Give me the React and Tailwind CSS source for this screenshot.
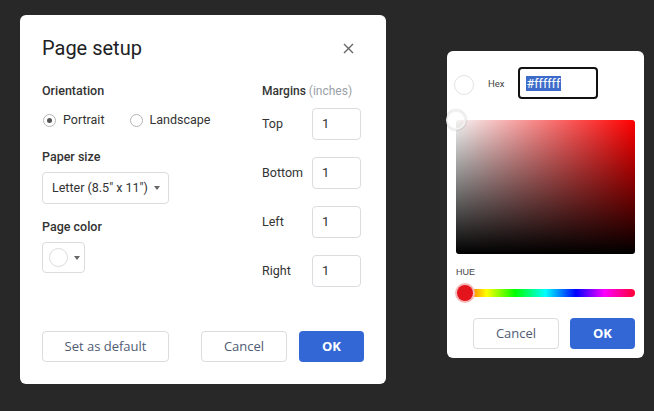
import React from "react";

const font = { fontFamily: "Roboto, 'Liberation Sans', sans-serif" };
const btnFont = { fontFamily: "'Open Sans', Roboto, sans-serif" };

function Caret() {
  return <span className="inline-block w-0 h-0 border-l-[3.5px] border-r-[3.5px] border-t-[4px] border-l-transparent border-r-transparent border-t-[#666]" />;
}

function Radio({ checked, label }) {
  return (
    <label className="flex items-center h-4">
      <span className="w-[13px] h-[13px] rounded-full border border-[#b5b5b5] flex items-center justify-center">
        {checked && <span className="w-[5px] h-[5px] rounded-full bg-[#555]" />}
      </span>
      <span className="ml-[7px] text-[12.5px] text-[#333]">{label}</span>
    </label>
  );
}

function MarginRow({ label }) {
  return (
    <div className="flex items-center h-8">
      <span className="w-[50px] text-[12.5px] text-[#333]">{label}</span>
      <div className="w-[49px] h-8 border border-[#dadce0] rounded-[4px] flex items-center pl-[9px] text-[13px] text-[#333]">1</div>
    </div>
  );
}

function PageSetup() {
  return (
    <div className="w-[366px] h-[369px] bg-white rounded-[6px] px-[22px] flex flex-col">
      <div className="flex items-center justify-between h-6 mt-[21px]">
        <h1 className="text-[20px] text-[#202124] leading-6">Page setup</h1>
        <svg width="11" height="11" viewBox="0 0 11 11" className="mr-[10px]">
          <path d="M1 1 L10 10 M10 1 L1 10" stroke="#666" strokeWidth="1.4" />
        </svg>
      </div>

      <div className="flex">
        <div className="w-[220px] flex flex-col">
          <div className="mt-[23px] h-4 text-[12.5px] font-medium text-[#333] leading-4">Orientation</div>
          <div className="mt-[13px] flex items-center">
            <div className="ml-[1px]"><Radio checked label="Portrait" /></div>
            <div className="ml-[25px]"><Radio label="Landscape" /></div>
          </div>
          <div className="mt-[21px] h-4 text-[12.5px] font-medium text-[#333] leading-4">Paper size</div>
          <div className="mt-[7px] w-[127px] h-8 border border-[#dadce0] rounded-[4px] flex items-center justify-between pl-[9px] pr-[8px] text-[12.5px] text-[#333]">
            <span>Letter (8.5" x 11")</span>
            <Caret />
          </div>
          <div className="mt-[15px] h-4 text-[12.5px] font-medium text-[#333] leading-4">Page color</div>
          <div className="mt-[7px] w-[43px] h-[31px] border border-[#dadce0] rounded-[4px] flex items-center pl-[6px] gap-[6px]">
            <span className="w-[19px] h-[19px] rounded-full border border-[#dadce0] bg-white" />
            <Caret />
          </div>
        </div>

        <div className="flex flex-col">
          <div className="mt-[23px] h-4 text-[12px] leading-4">
            <span className="font-medium text-[#333]">Margins</span>
            <span className="text-[#9aa0a6]"> (inches)</span>
          </div>
          <div className="mt-[9px] flex flex-col gap-[17px]">
            <MarginRow label="Top" />
            <MarginRow label="Bottom" />
            <MarginRow label="Left" />
            <MarginRow label="Right" />
          </div>
        </div>
      </div>

      <div className="mt-auto mb-[22px] flex items-center" style={btnFont}>
        <button className="w-[127px] h-[31px] border border-[#dadce0] rounded-[4px] text-[13px] text-[#4f5b73]">Set as default</button>
        <button className="ml-auto w-[86px] h-[31px] border border-[#dadce0] rounded-[4px] text-[13px] text-[#4f5b73]">Cancel</button>
        <button className="ml-[12px] w-[65px] h-[31px] rounded-[4px] bg-[#3367d6] text-[13px] font-bold text-white">OK</button>
      </div>
    </div>
  );
}

function ColorPicker() {
  return (
    <div className="w-[197px] h-[307px] bg-white rounded-[6px] px-[9px] flex flex-col">
      <div className="mt-[16px] h-8 flex items-center -ml-[2px]">
        <span className="w-5 h-5 rounded-full border border-[#e3e3e3] mt-[3px]" />
        <span className="ml-[14px] text-[9.5px] text-[#444] mt-[3px]">Hex</span>
        <div className="ml-[13px] w-[80px] h-8 border-2 border-[#111] rounded-[4px] flex items-center pl-[6px]">
          <span className="bg-[#3d6bc9] text-white text-[12.5px] leading-[15px] px-[1px]">#ffffff</span>
        </div>
      </div>

      <div className="relative mt-[21px] h-[134px] rounded-[3px] bg-[linear-gradient(to_top,#000,rgba(0,0,0,0)),linear-gradient(to_right,#f4f4f4,#f00)]">
        <span className="absolute -left-[10px] -top-[10px] w-5 h-5 rounded-full border-2 border-[#f2f2f2] shadow-[0_0_2px_rgba(0,0,0,0.35)]" />
      </div>

      <div className="mt-[12px] h-3 text-[9px] leading-3 text-[#444]" style={{ fontFamily: "'Liberation Sans', sans-serif" }}>HUE</div>

      <div className="relative mt-[11px] h-2 rounded-full bg-[linear-gradient(to_right,#f00,#ff0_17%,#0f0_33%,#0ff_50%,#00f_67%,#f0f_83%,#f03)]">
        <span className="absolute left-[1px] -top-[4px] w-4 h-4 rounded-full bg-[#e3141b] ring-2 ring-[#f6b9b9]" />
      </div>

      <div className="mt-[21px] flex items-center justify-end" style={btnFont}>
        <button className="w-[86px] h-[31px] border border-[#dadce0] rounded-[4px] text-[13px] text-[#4f5b73]">Cancel</button>
        <button className="ml-[11px] w-[65px] h-[31px] rounded-[4px] bg-[#3367d6] text-[13px] font-bold text-white">OK</button>
      </div>
    </div>
  );
}

export default function App() {
  return (
    <div className="w-[654px] h-[411px] bg-[#282828] flex items-start overflow-hidden" style={font}>
      <div className="ml-[20px] mt-[15px]">
        <PageSetup />
      </div>
      <div className="ml-[61px] mt-[51px]">
        <ColorPicker />
      </div>
    </div>
  );
}
